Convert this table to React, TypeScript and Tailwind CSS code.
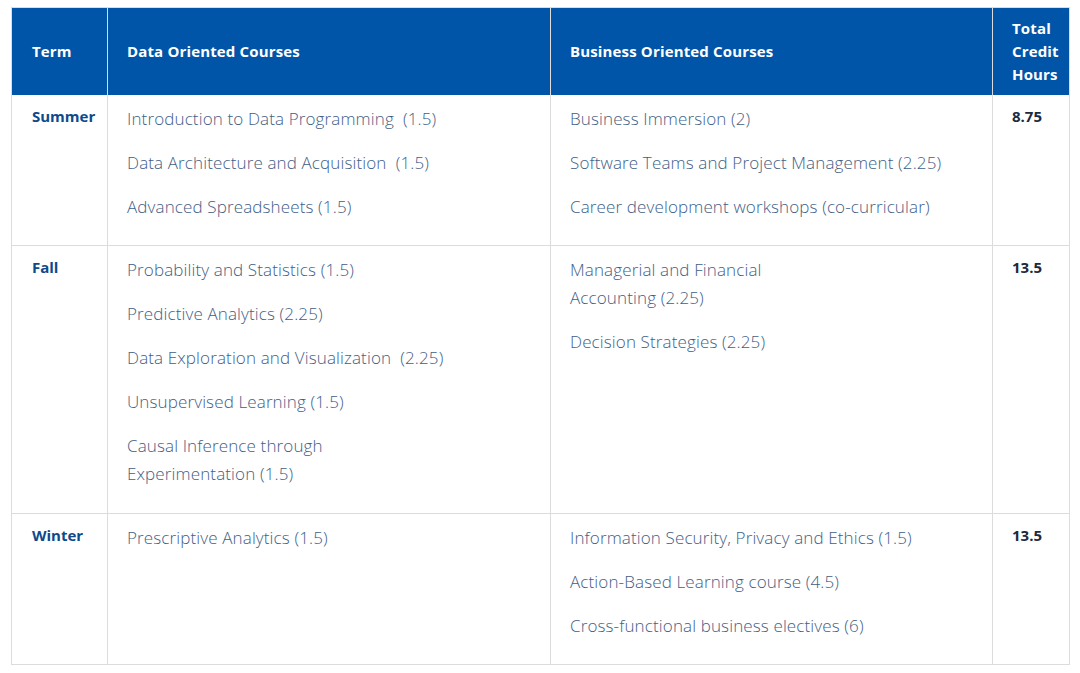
const rows = [
  {
    term: "Summer",
    data: [
      "Introduction to Data Programming\u00a0 (1.5)",
      "Data Architecture and Acquisition\u00a0 (1.5)",
      "Advanced Spreadsheets (1.5)",
    ],
    business: [
      "Business Immersion (2)",
      "Software Teams and Project Management (2.25)",
      "Career development workshops (co-curricular)",
    ],
    total: "8.75",
  },
  {
    term: "Fall",
    data: [
      "Probability and Statistics (1.5)",
      "Predictive Analytics (2.25)",
      "Data Exploration and Visualization\u00a0 (2.25)",
      "Unsupervised Learning (1.5)",
      "Causal Inference through\nExperimentation (1.5)",
    ],
    business: ["Managerial and Financial\nAccounting (2.25)", "Decision Strategies (2.25)"],
    total: "13.5",
  },
  {
    term: "Winter",
    data: ["Prescriptive Analytics (1.5)"],
    business: [
      "Information Security, Privacy and Ethics (1.5)",
      "Action-Based Learning course (4.5)",
      "Cross-functional business electives (6)",
    ],
    total: "13.5",
  },
];

function CourseList({ items }: { items: string[] }) {
  return (
    <>
      {items.map((c) => (
        <p
          key={c}
          className="mb-4 whitespace-pre-line text-[17px] font-light leading-[28px] tracking-[0.13px] text-[#3f5e86]"
        >
          {c}
        </p>
      ))}
    </>
  );
}

export default function App() {
  return (
    <div className="min-h-[673px] bg-white pl-[11px] pr-[11px] pt-[7px] font-['Open_Sans',sans-serif]">
      <table className="w-[1058px] table-fixed border-collapse border border-[#dcdcdc]">
        <colgroup>
          <col className="w-[96px]" />
          <col className="w-[443px]" />
          <col className="w-[442px]" />
          <col className="w-[77px]" />
        </colgroup>
        <thead>
          <tr className="h-[87px] bg-[#0055a9] text-left text-[15px] font-bold leading-[23px] tracking-[0.15px] text-white">
            <th className="border-r border-[#dcdcdc] pl-5 pr-2 align-middle">Term</th>
            <th className="border-r border-[#dcdcdc] pl-[19px] pr-2 align-middle">Data Oriented Courses</th>
            <th className="border-r border-[#dcdcdc] pl-[19px] pr-2 align-middle">Business Oriented Courses</th>
            <th className="pl-[19px] pr-0 align-middle">
              Total
              <br />
              Credit
              <br />
              Hours
            </th>
          </tr>
        </thead>
        <tbody>
          {rows.map((r) => (
            <tr key={r.term} className="border-b border-[#dcdcdc] align-top">
              <td className="border-r border-[#dcdcdc] pb-2 pl-5 pt-[10px] text-[15px] font-bold leading-[23px] text-[#0d4a8c]">
                {r.term}
              </td>
              <td
                className={
                  r.term === "Fall"
                    ? "border-r border-[#dcdcdc] pb-[9px] pl-[19px] pt-[10px]"
                    : "border-r border-[#dcdcdc] pb-2 pl-[19px] pt-[10px]"
                }
              >
                <CourseList items={r.data} />
              </td>
              <td className="border-r border-[#dcdcdc] pb-2 pl-[19px] pt-[10px]">
                <CourseList items={r.business} />
              </td>
              <td className="pb-2 pl-[19px] pt-[10px] text-[15px] font-bold leading-[23px] text-[#1c2a40]">{r.total}</td>
            </tr>
          ))}
        </tbody>
      </table>
    </div>
  );
}
